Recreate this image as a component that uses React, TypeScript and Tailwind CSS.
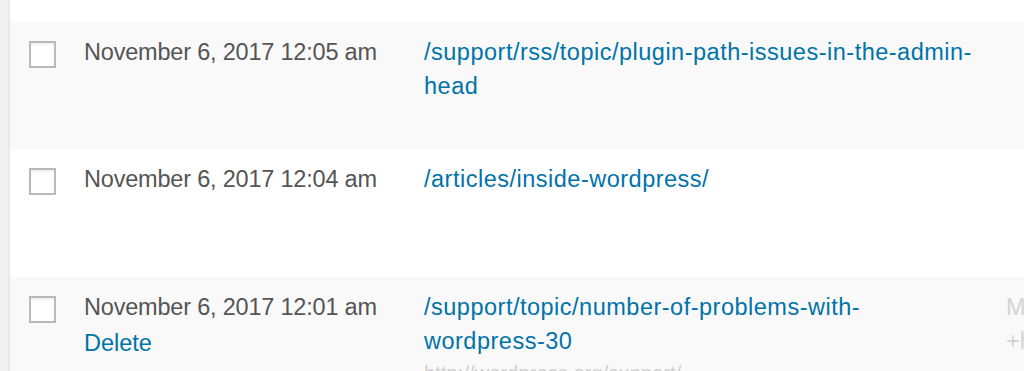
import type { ReactNode } from "react"

type Row = {
  date: string
  path: string
  shaded: boolean
  height: string
  actions?: boolean
  url?: string
  meta?: string[]
}

const rows: Row[] = [
  {
    date: "November 6, 2017 12:05 am",
    path: "/support/rss/topic/plugin-path-issues-in-the-admin-head",
    shaded: true,
    height: "h-[127px]",
  },
  {
    date: "November 6, 2017 12:04 am",
    path: "/articles/inside-wordpress/",
    shaded: false,
    height: "h-[128px]",
  },
  {
    date: "November 6, 2017 12:01 am",
    path: "/support/topic/number-of-problems-with-wordpress-30",
    shaded: true,
    height: "h-[140px]",
    actions: true,
    url: "http://wordpress.org/support/",
    meta: ["Mozilla/5.0", "+http://"],
  },
]

function Checkbox() {
  return (
    <span className="block w-[27px] h-[27px] border-2 border-[#b9b9b9] bg-white shadow-[inset_0_2px_2px_rgba(0,0,0,0.06)]" />
  )
}

function Cell({ className, children }: { className: string; children?: ReactNode }) {
  return <div className={className}>{children}</div>
}

export default function App() {
  return (
    <div
      className="flex w-[1024px] h-[371px] overflow-hidden bg-white"
      style={{ fontFamily: '"Liberation Sans", Arial, sans-serif' }}
    >
      <div className="w-[10px] shrink-0 bg-[#f1f1f1] border-r-2 border-[#e9e9e9]" />
      <div className="flex-1 pt-[22px]">
        {rows.map(r => (
          <div key={r.date}
            className={`flex ${r.height} ${r.shaded ? "bg-[#f9f9f9]" : "bg-white"}`}>
            <Cell className="w-[74px] shrink-0 pl-[19px] pt-[19px]">
              <Checkbox />
            </Cell>
            <Cell className="w-[340px] shrink-0 pt-[13px] text-[23.5px] leading-[34px] tracking-[-0.2px] text-[#555]">
              <div>{r.date}</div>
              {r.actions && (
                <div className="pt-[2px] text-[#0073aa] tracking-[0px]">Delete</div>
              )}
            </Cell>
            <Cell className="w-[556px] shrink-0 pt-[13px] text-[23.5px] leading-[34px] tracking-[0.5px]">
              <div className="text-[#0073aa]">{r.path}</div>
              {r.url && (
                <div className="pt-[3px] text-[20px] leading-[24px] tracking-[0.1px] text-[#d0d0d0]">{r.url}</div>
              )}
            </Cell>
            <Cell className="pl-[26px] pt-[13px] text-[23.5px] leading-[34px] text-[#d4d4d4] whitespace-nowrap">
              {r.meta?.map(m => <div key={m}>{m}</div>)}
            </Cell>
          </div>
        ))}
      </div>
    </div>
  )
}
